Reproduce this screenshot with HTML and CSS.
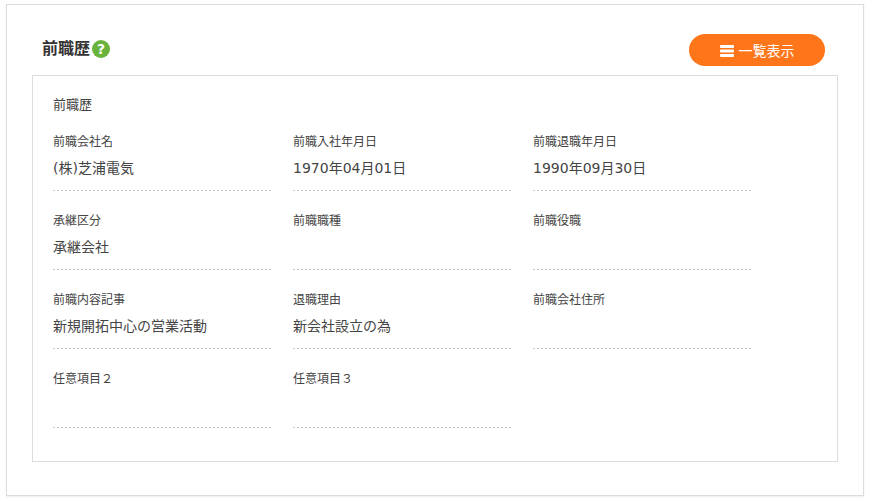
FILE: index.html
```html
<!DOCTYPE html>
<html lang="ja">

<head>
  <meta charset="UTF-8">
  <title>前職歴</title>
  <link rel="stylesheet" href="styles.css">
</head>

<body>
  <div class="card">
    <div class="card-header">
      <h2 class="card-title">前職歴</h2>
      <span class="help-icon">?</span>
      <button class="btn-list">
        <svg class="btn-icon" width="14" height="12" viewBox="0 0 14 12">
          <rect x="0" y="0" width="14" height="3" rx="1" fill="#fff"></rect>
          <rect x="0" y="4.5" width="14" height="3" rx="1" fill="#fff"></rect>
          <rect x="0" y="9" width="14" height="3" rx="1" fill="#fff"></rect>
        </svg>
        一覧表示
      </button>
    </div>

    <div class="panel">
      <p class="panel-title">前職歴</p>
      <div class="field-grid">
        <div class="field"><span class="field-label">前職会社名</span><p class="field-value">(株)芝浦電気</p></div>
        <div class="field"><span class="field-label">前職入社年月日</span><p class="field-value">1970年04月01日</p></div>
        <div class="field"><span class="field-label">前職退職年月日</span><p class="field-value">1990年09月30日</p></div>

        <div class="field"><span class="field-label">承継区分</span><p class="field-value">承継会社</p></div>
        <div class="field"><span class="field-label">前職職種</span><p class="field-value"></p></div>
        <div class="field"><span class="field-label">前職役職</span><p class="field-value"></p></div>

        <div class="field"><span class="field-label">前職内容記事</span><p class="field-value">新規開拓中心の営業活動</p></div>
        <div class="field"><span class="field-label">退職理由</span><p class="field-value">新会社設立の為</p></div>
        <div class="field"><span class="field-label">前職会社住所</span><p class="field-value"></p></div>

        <div class="field"><span class="field-label">任意項目２</span><p class="field-value"></p></div>
        <div class="field"><span class="field-label">任意項目３</span><p class="field-value"></p></div>
      </div>
    </div>
  </div>
</body>
</html>
```

FILE: styles.css
```css
* {
  box-sizing: border-box;
}

body {
  margin: 0;
  padding: 4px 8px 6px 6px;
  background-color: #fff;
  color: #444;
  font-family: "DejaVu Sans", "Noto Sans CJK JP", sans-serif;
}

.card {
  height: 492px;
  padding: 29px 25px 0 25px;
  border: 1px solid #ddd;
  box-shadow: 0 1px 2px rgba(0, 0, 0, 0.08);
}

.card-header {
  display: flex;
  align-items: center;
  height: 32px;
  margin: 0 13px 9px 10px;
}

.card-title {
  margin: 0 0 2px 0;
  color: #333;
  font-size: 16px;
  font-weight: bold;
  line-height: 30px;
}

.help-icon {
  width: 18px;
  height: 18px;
  margin: 0 0 3px 2px;
  border-radius: 50%;
  background-color: #69b33c;
  color: #fff;
  font-size: 14px;
  font-weight: bold;
  line-height: 18px;
  text-align: center;
}

.btn-list {
  display: flex;
  align-items: center;
  justify-content: center;
  gap: 5px;
  width: 136px;
  height: 32px;
  margin-left: auto;
  padding: 0 0 1px 0;
  border: 0;
  border-radius: 16px;
  background-color: #ff7519;
  color: #fff;
  font-family: inherit;
  font-size: 14px;
}

.btn-icon {
  margin-top: 3px;
}

.panel {
  height: 387px;
  padding: 20px 20px 0 20px;
  border: 1px solid #ddd;
}

.panel-title {
  margin: 0 0 19px 0;
  font-size: 13px;
  line-height: 18px;
}

.field-grid {
  display: grid;
  grid-template-columns: repeat(3, 218px);
  grid-auto-rows: 58px;
  gap: 21px 22px;
}

/* dashes are 2px on, 2px off, which a 1px dashed border can't give */
.field {
  background-image: linear-gradient(to right, #c4c4c4 50%, transparent 50%);
  background-position: left bottom;
  background-repeat: repeat-x;
  background-size: 4px 1px;
}

.field-label {
  display: block;
  font-size: 12px;
  line-height: 18px;
}

.field-value {
  margin: 7px 0 0 0;
  font-size: 14px;
  line-height: 20px;
}
```
